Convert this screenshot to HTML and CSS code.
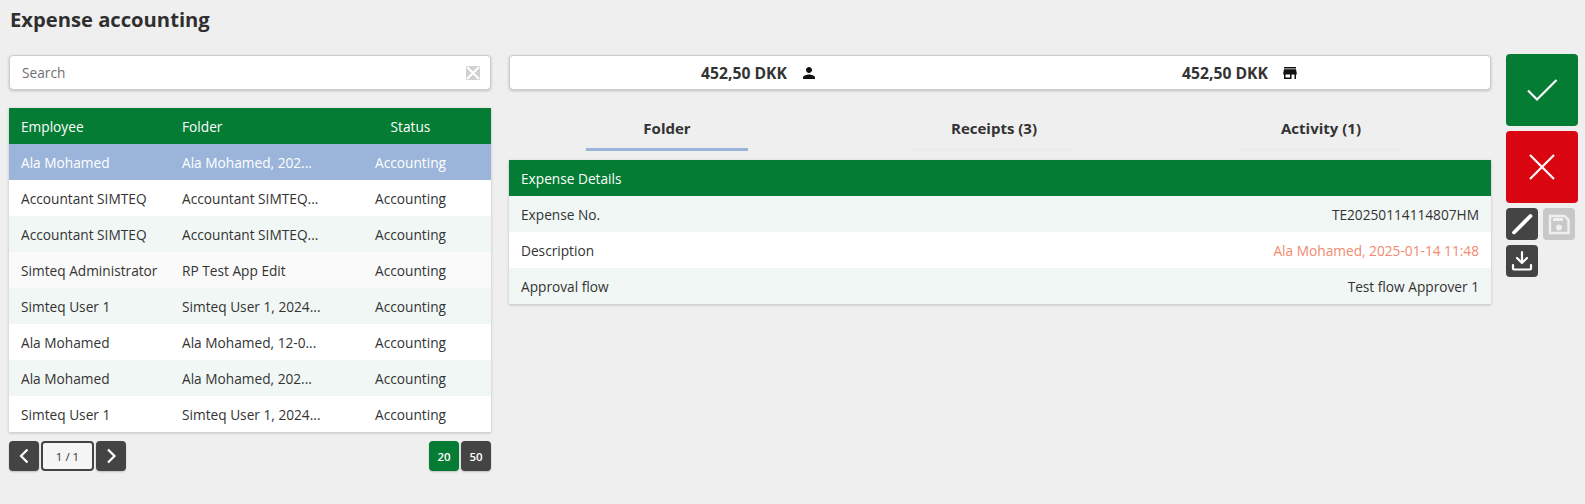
FILE: index.html
```html
<!DOCTYPE html>
<html lang="en">
<head>
<meta charset="utf-8">
<title>Expense accounting</title>
<link rel="stylesheet" href="styles.css">
</head>
<body>
<h1 class="title">Expense accounting</h1>
<div class="layout">
  <section class="left">
    <div class="card search">
      <span class="search-text">Search</span>
      <svg class="clear" viewBox="0 0 14 14"><path fill="#d0d0d0" d="M0 0h14v14H0z"/><path stroke="#fff" stroke-width="2" d="M1 1l12 12M13 1L1 13"/></svg>
    </div>
    <div class="table">
      <div class="row head"><span>Employee</span><span>Folder</span><span class="c3">Status</span></div>
      <div class="row sel"><span>Ala Mohamed</span><span>Ala Mohamed, 202...</span><span class="c3">Accounting</span></div>
      <div class="row"><span>Accountant SIMTEQ</span><span>Accountant SIMTEQ...</span><span class="c3">Accounting</span></div>
      <div class="row alt"><span>Accountant SIMTEQ</span><span>Accountant SIMTEQ...</span><span class="c3">Accounting</span></div>
      <div class="row soft"><span>Simteq Administrator</span><span>RP Test App Edit</span><span class="c3">Accounting</span></div>
      <div class="row alt"><span>Simteq User 1</span><span>Simteq User 1, 2024...</span><span class="c3">Accounting</span></div>
      <div class="row"><span>Ala Mohamed</span><span>Ala Mohamed, 12-0...</span><span class="c3">Accounting</span></div>
      <div class="row alt"><span>Ala Mohamed</span><span>Ala Mohamed, 202...</span><span class="c3">Accounting</span></div>
      <div class="row"><span>Simteq User 1</span><span>Simteq User 1, 2024...</span><span class="c3">Accounting</span></div>
    </div>
    <div class="pager">
      <button class="btn"><svg viewBox="0 0 30 30" class="chev"><path d="M18.500 8.500l-6.500 6.500 6.500 6.500"/></svg></button>
      <div class="page">1 / 1</div>
      <button class="btn"><svg viewBox="0 0 30 30" class="chev"><path d="M12 8.500l6.500 6.500-6.500 6.500"/></svg></button>
      <div class="spacer"></div>
      <button class="btn size on">20</button>
      <button class="btn size">50</button>
    </div>
  </section>
  <section class="main">
    <div class="card summary">
      <div class="sum sum-a">452,50 DKK
        <svg class="sum-ico" viewBox="0 0 24 24"><path d="M12 12c2.210 0 4-1.790 4-4s-1.790-4-4-4-4 1.790-4 4 1.790 4 4 4zm0 2c-2.670 0-8 1.340-8 4v2h16v-2c0-2.660-5.330-4-8-4z"/></svg>
      </div>
      <div class="sum sum-b">452,50 DKK
        <svg class="sum-ico" viewBox="0 0 24 24"><path d="M20 4H4v2h16V4zm1 10v-2l-1-5H4l-1 5v2h1v6h10v-6h4v6h2v-6h1zm-9 4H6v-4h6v4z"/></svg>
      </div>
    </div>
    <div class="tabs">
      <div class="tab active">Folder</div>
      <div class="tab">Receipts (3)</div>
      <div class="tab">Activity (1)</div>
    </div>
    <div class="details">
      <div class="d-head">Expense Details</div>
      <div class="d-row alt"><span>Expense No.</span><span>TE20250114114807HM</span></div>
      <div class="d-row white"><span>Description</span><span class="salmon">Ala Mohamed, 2025-01-14 11:48</span></div>
      <div class="d-row alt"><span>Approval flow</span><span>Test flow Approver 1</span></div>
    </div>
  </section>
  <aside class="actions">
    <button class="big green"><svg viewBox="0 0 72 72"><path d="M22 36.500l9 9 19.500-19.500"/></svg></button>
    <button class="big red"><svg viewBox="0 0 72 72"><path d="M24 24l24 24M48 24L24 48"/></svg></button>
    <div class="tools">
      <button class="tool"><svg viewBox="0 0 32 32"><path fill="none" stroke="#fff" stroke-width="3.800" stroke-linecap="round" d="M8 24.500L24.500 8"/></svg></button>
      <button class="tool off"><svg viewBox="0 0 32 32"><path fill="none" stroke="#efefef" stroke-width="2.400" d="M7 8h14.500l4 4v13H7z"/><path fill="#efefef" d="M10 10h10v3H10z"/><circle cx="16" cy="19.500" r="3" fill="#efefef"/></svg></button>
      <button class="tool"><svg viewBox="0 0 32 32"><path fill="none" stroke="#fff" stroke-width="2.200" stroke-linecap="round" stroke-linejoin="round" d="M16 7v10.500M11 13l5 5 5-5M7 20v3.500a1 1 0 0 0 1 1h16a1 1 0 0 0 1-1V20"/></svg></button>
    </div>
  </aside>
</div>
</body>
</html>
```
FILE: styles.css
```css
* { box-sizing: border-box; }
html, body { margin: 0; height: 100%; }
body {
  background: #efefef;
  color: #333;
  font-family: "Open Sans", "Noto Sans", sans-serif;
  font-size: 13.7px;
  padding: 0 7px 0 9px;
  overflow: hidden;
}
.title { margin: 0; height: 54px; padding: 6px 0 0 1px; font-size: 20.200px; line-height: 27px; font-weight: 700; color: #2f2f2f; }
.layout { display: flex; align-items: flex-start; }
.left { width: 482px; flex: none; }
.main { width: 982px; flex: none; margin-left: 18px; }
.actions { width: 72px; flex: none; margin-left: 15px; display: flex; flex-direction: column; gap: 5px; }
.card { background: #fff; border: 1px solid #ccc; border-radius: 4px; box-shadow: 0 1px 3px rgba(0,0,0,.2); }
.search { height: 35px; margin: 1px 0 0; display: flex; align-items: center; justify-content: space-between; padding: 0 10px 0 12px; }
.search-text { color: #6f6f6f; }
.clear { width: 14px; height: 14px; }
.table { margin-top: 18px; box-shadow: 0 1px 3px rgba(0,0,0,.2); }
.row { display: grid; grid-template-columns: 161px 190px 1fr; height: 36px; align-items: center; background: #fff; padding: 1px 0 0 12px; }
.row .c3 { text-align: center; width: 77px; }
.head { background: #047c33; color: #fff; }
.sel { background: #9bb5da; color: #fff; }
.alt { background: #f1f7f5; }
.soft { background: #fafafa; }
.pager { display: flex; gap: 2px; margin-top: 9px; }
.spacer { flex: 1; }
.btn { width: 30px; height: 30px; border: 0; padding: 0; background: #444; color: #fff; border-radius: 4px; font: 600 11.500px "Open Sans", sans-serif; box-shadow: 0 1px 2px rgba(0,0,0,.2); display: block; }
.on { background: #047c33; }
.chev { display: block; width: 30px; height: 30px; fill: none; stroke: #fff; stroke-width: 2.200; }
.page { width: 53px; height: 30px; border: 2px solid #444; border-radius: 4px; background: #f5f5f5; display: flex; align-items: center; justify-content: center; font-size: 11.500px; }
.summary { height: 35px; display: flex; margin-top: 1px; }
.sum { flex: 1; display: flex; align-items: center; justify-content: center; gap: 13px; font-weight: 700; font-size: 15.700px; }
.sum-a { padding-left: 9px; }
.sum-b { padding-right: 9px; }
.sum-ico { width: 18px; height: 18px; fill: #111; }
.tabs { display: flex; gap: 165px; margin-top: 20px; height: 40px; padding-left: 77px; }
.tab { width: 162px; height: 41px; padding-top: 7px; text-align: center; font-weight: 700; font-size: 15px; line-height: 22px; border-bottom: 3px solid #ececec; }
.active { border-bottom-color: #9bb5da; }
.details { margin-top: 10px; box-shadow: 0 1px 3px rgba(0,0,0,.2); }
.d-head { height: 36px; background: #047c33; color: #fff; display: flex; align-items: center; padding: 1px 12px 0; }
.d-row { height: 36px; display: flex; align-items: center; justify-content: space-between; padding: 1px 12px 0; }
.white { background: #fff; }
.salmon { color: #f08a70; }
button { cursor: pointer; }
.big { height: 72px; border: 0; border-radius: 4px; padding: 0; display: block; width: 72px; }
.big svg { display: block; width: 72px; height: 72px; fill: none; stroke: #fff; stroke-width: 2.200; }
.green { background: #047c33; }
.red { background: #d90511; }
.tools { display: flex; flex-wrap: wrap; gap: 5px; }
.tool { width: 32px; height: 32px; border: 0; padding: 0; border-radius: 4px; background: #444; display: block; }
.tool svg { display: block; width: 32px; height: 32px; }
.off { background: #c8c8c8; }
```
